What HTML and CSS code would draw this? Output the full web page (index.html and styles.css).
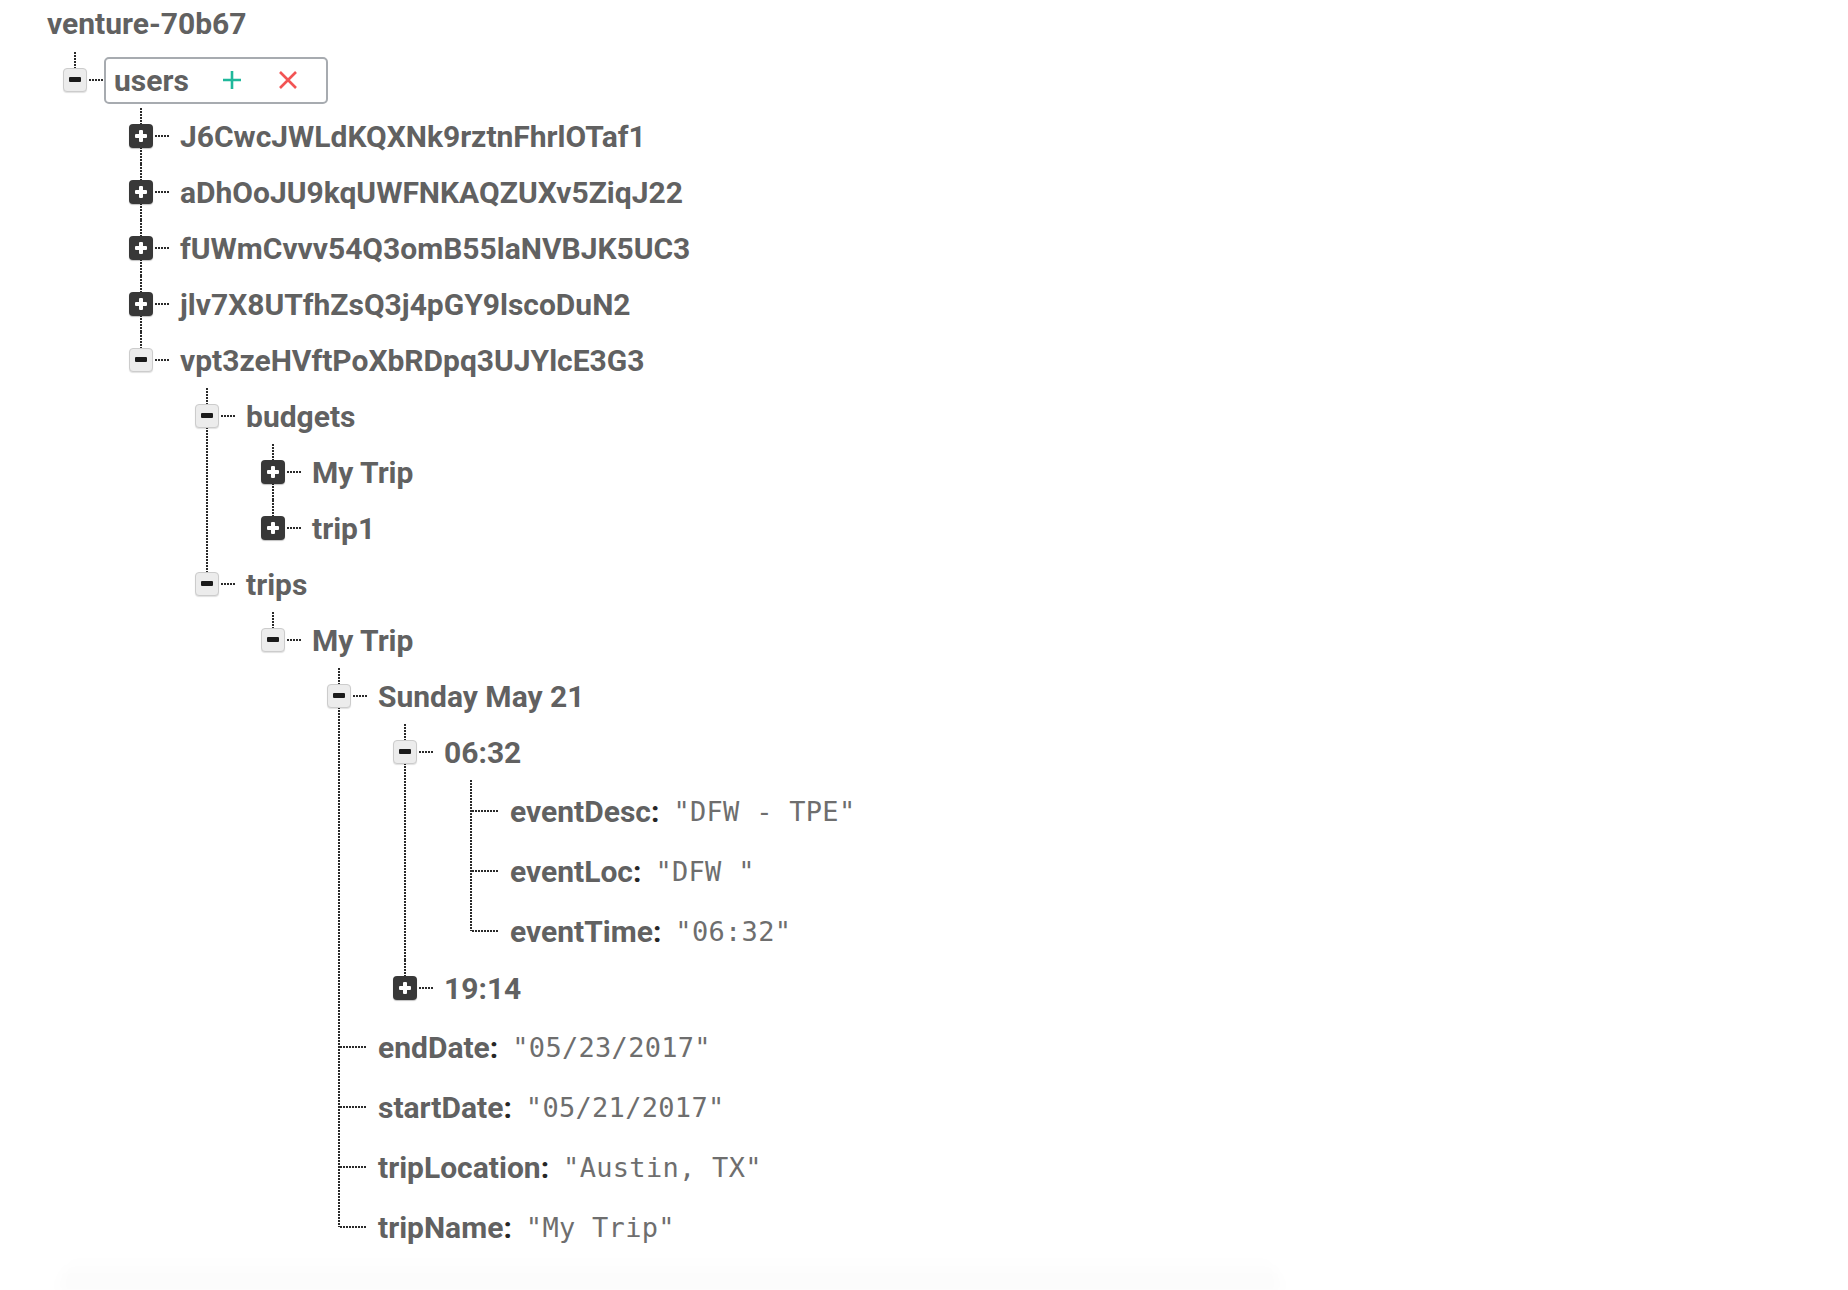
FILE: index.html
```html
<!DOCTYPE html>
<html lang="en">
<head>
<meta charset="utf-8">
<title>venture-70b67</title>
<link rel="stylesheet" href="styles.css">
</head>
<body>
<div class="tree">
  <div class="root-title">venture-70b67</div>
  <ul class="branch root-branch">
    <li class="last">
      <div class="row">
        <span class="toggle minus"></span><span class="conn"></span>
        <span class="label selected"><span class="name">users</span><span class="act add"><svg width="20" height="20" viewBox="0 0 20 20"><path d="M10 1v18M1 10h18" stroke="#1fb89b" stroke-width="2.6" fill="none"/></svg></span><span class="act del"><svg width="20" height="20" viewBox="0 0 20 20"><path d="M2 2l16 16M18 2L2 18" stroke="#f25454" stroke-width="2.6" fill="none"/></svg></span></span>
      </div>
      <ul class="branch">
        <li><div class="row"><span class="toggle plus"></span><span class="conn"></span><span class="label">J6CwcJWLdKQXNk9rztnFhrlOTaf1</span></div></li>
        <li><div class="row"><span class="toggle plus"></span><span class="conn"></span><span class="label">aDhOoJU9kqUWFNKAQZUXv5ZiqJ22</span></div></li>
        <li><div class="row"><span class="toggle plus"></span><span class="conn"></span><span class="label">fUWmCvvv54Q3omB55laNVBJK5UC3</span></div></li>
        <li><div class="row"><span class="toggle plus"></span><span class="conn"></span><span class="label">jlv7X8UTfhZsQ3j4pGY9lscoDuN2</span></div></li>
        <li class="last">
          <div class="row"><span class="toggle minus"></span><span class="conn"></span><span class="label">vpt3zeHVftPoXbRDpq3UJYlcE3G3</span></div>
          <ul class="branch">
            <li>
              <div class="row"><span class="toggle minus"></span><span class="conn"></span><span class="label">budgets</span></div>
              <ul class="branch">
                <li><div class="row"><span class="toggle plus"></span><span class="conn"></span><span class="label">My Trip</span></div></li>
                <li class="last"><div class="row"><span class="toggle plus"></span><span class="conn"></span><span class="label">trip1</span></div></li>
              </ul>
            </li>
            <li class="last">
              <div class="row"><span class="toggle minus"></span><span class="conn"></span><span class="label">trips</span></div>
              <ul class="branch">
                <li class="last">
                  <div class="row"><span class="toggle minus"></span><span class="conn"></span><span class="label">My Trip</span></div>
                  <ul class="branch">
                    <li>
                      <div class="row"><span class="toggle minus"></span><span class="conn"></span><span class="label">Sunday May 21</span></div>
                      <ul class="branch">
                        <li>
                          <div class="row"><span class="toggle minus"></span><span class="conn"></span><span class="label">06:32</span></div>
                          <ul class="branch">
                            <li class="leaf"><div class="row"><span class="conn long"></span><span class="label">eventDesc<span class="colon">:</span><span class="val">"DFW - TPE"</span></span></div></li>
                            <li class="leaf"><div class="row"><span class="conn long"></span><span class="label">eventLoc<span class="colon">:</span><span class="val">"DFW "</span></span></div></li>
                            <li class="leaf last"><div class="row"><span class="conn long"></span><span class="label">eventTime<span class="colon">:</span><span class="val">"06:32"</span></span></div></li>
                          </ul>
                        </li>
                        <li class="last"><div class="row"><span class="toggle plus"></span><span class="conn"></span><span class="label">19:14</span></div></li>
                      </ul>
                    </li>
                    <li class="leaf"><div class="row"><span class="conn long"></span><span class="label">endDate<span class="colon">:</span><span class="val">"05/23/2017"</span></span></div></li>
                    <li class="leaf"><div class="row"><span class="conn long"></span><span class="label">startDate<span class="colon">:</span><span class="val">"05/21/2017"</span></span></div></li>
                    <li class="leaf"><div class="row"><span class="conn long"></span><span class="label">tripLocation<span class="colon">:</span><span class="val">"Austin, TX"</span></span></div></li>
                    <li class="leaf last"><div class="row"><span class="conn long"></span><span class="label">tripName<span class="colon">:</span><span class="val">"My Trip"</span></span></div></li>
                  </ul>
                </li>
              </ul>
            </li>
          </ul>
        </li>
      </ul>
    </li>
  </ul>
</div>
<div class="next-card"></div>
</body>
</html>
```
FILE: styles.css
```css
html, body {
  margin: 0;
  padding: 0;
  background: #ffffff;
}

body {
  font-family: Roboto, "Noto Sans", "DejaVu Sans", sans-serif;
  color: #616161;
}

.tree {
  padding-left: 47px;
}

.root-title {
  height: 48px;
  line-height: 48px;
  margin-bottom: 4px;
  font-size: 30px;
  font-weight: 700;
  color: #616161;
}

.branch {
  list-style: none;
  margin: 0;
  padding: 0 0 0 66px;
}

.root-branch {
  padding-left: 17px;
}

.branch li {
  position: relative;
}

/* vertical dotted guide line */
.branch li::before {
  content: "";
  position: absolute;
  left: 10px;
  top: 0;
  bottom: 0;
  width: 2px;
  background: repeating-linear-gradient(to bottom, #2a2a2a 0 2px, transparent 2px 3px);
}

.branch li.last::before {
  bottom: auto;
  height: 28px;
}

.branch li.leaf.last::before {
  height: 31px;
}

.row {
  height: 56px;
  display: flex;
  align-items: center;
}

.leaf > .row {
  height: 60px;
  padding-left: 12px;
  padding-top: 2px;
  box-sizing: border-box;
}

.toggle {
  position: relative;
  z-index: 1;
  flex: none;
  width: 24px;
  height: 24px;
  margin-left: -1px;
  box-sizing: border-box;
  border-radius: 4px;
}

.toggle.minus {
  background: #ececec;
  border: 1px solid #cccccc;
  box-shadow: 0 1px 1px rgba(0, 0, 0, 0.12);
}

.toggle.minus::after {
  content: "";
  position: absolute;
  left: 5px;
  top: 8px;
  width: 12px;
  height: 5px;
  background: #1a1a1a;
  border-radius: 1px;
}

.toggle.plus {
  background: #383838;
  box-shadow: 0 1px 1px rgba(0, 0, 0, 0.25);
}

.toggle.plus::before,
.toggle.plus::after {
  content: "";
  position: absolute;
  background: #ffffff;
  border-radius: 1px;
}

.toggle.plus::before {
  left: 6px;
  top: 10px;
  width: 12px;
  height: 4px;
}

.toggle.plus::after {
  left: 10px;
  top: 6px;
  width: 4px;
  height: 12px;
}

.conn {
  flex: none;
  width: 14px;
  height: 2px;
  margin-left: 2px;
  background: repeating-linear-gradient(to right, #2a2a2a 0 2px, transparent 2px 3px);
}

.conn.long {
  width: 27px;
  margin-left: 0;
}

.label {
  display: inline-flex;
  align-items: center;
  margin-left: 1px;
  padding: 5px 8px;
  border: 2px solid transparent;
  border-radius: 5px;
  font-size: 30px;
  line-height: 33px;
  font-weight: 700;
  color: #616161;
  white-space: nowrap;
}

.label.selected {
  border-color: #a7abb0;
  padding-right: 28px;
}

.act {
  display: inline-flex;
  align-items: center;
}

.act.add {
  margin-left: 33px;
}

.act.del {
  margin-left: 36px;
}

.colon {
  color: #262626;
}

.val {
  margin-left: 14px;
  font-family: "DejaVu Sans Mono", "Liberation Mono", monospace;
  font-weight: 400;
  font-size: 27px;
  color: #6e6e6e;
  letter-spacing: 0.3px;
  white-space: pre;
}

.next-card {
  margin: 0 0 0 60px;
  width: 1220px;
  height: 34px;
  border-radius: 30px 30px 0 0;
  background: linear-gradient(to bottom, rgba(0, 0, 0, 0) 0, rgba(0, 0, 0, 0.018) 100%);
  filter: blur(6px);
}
```
